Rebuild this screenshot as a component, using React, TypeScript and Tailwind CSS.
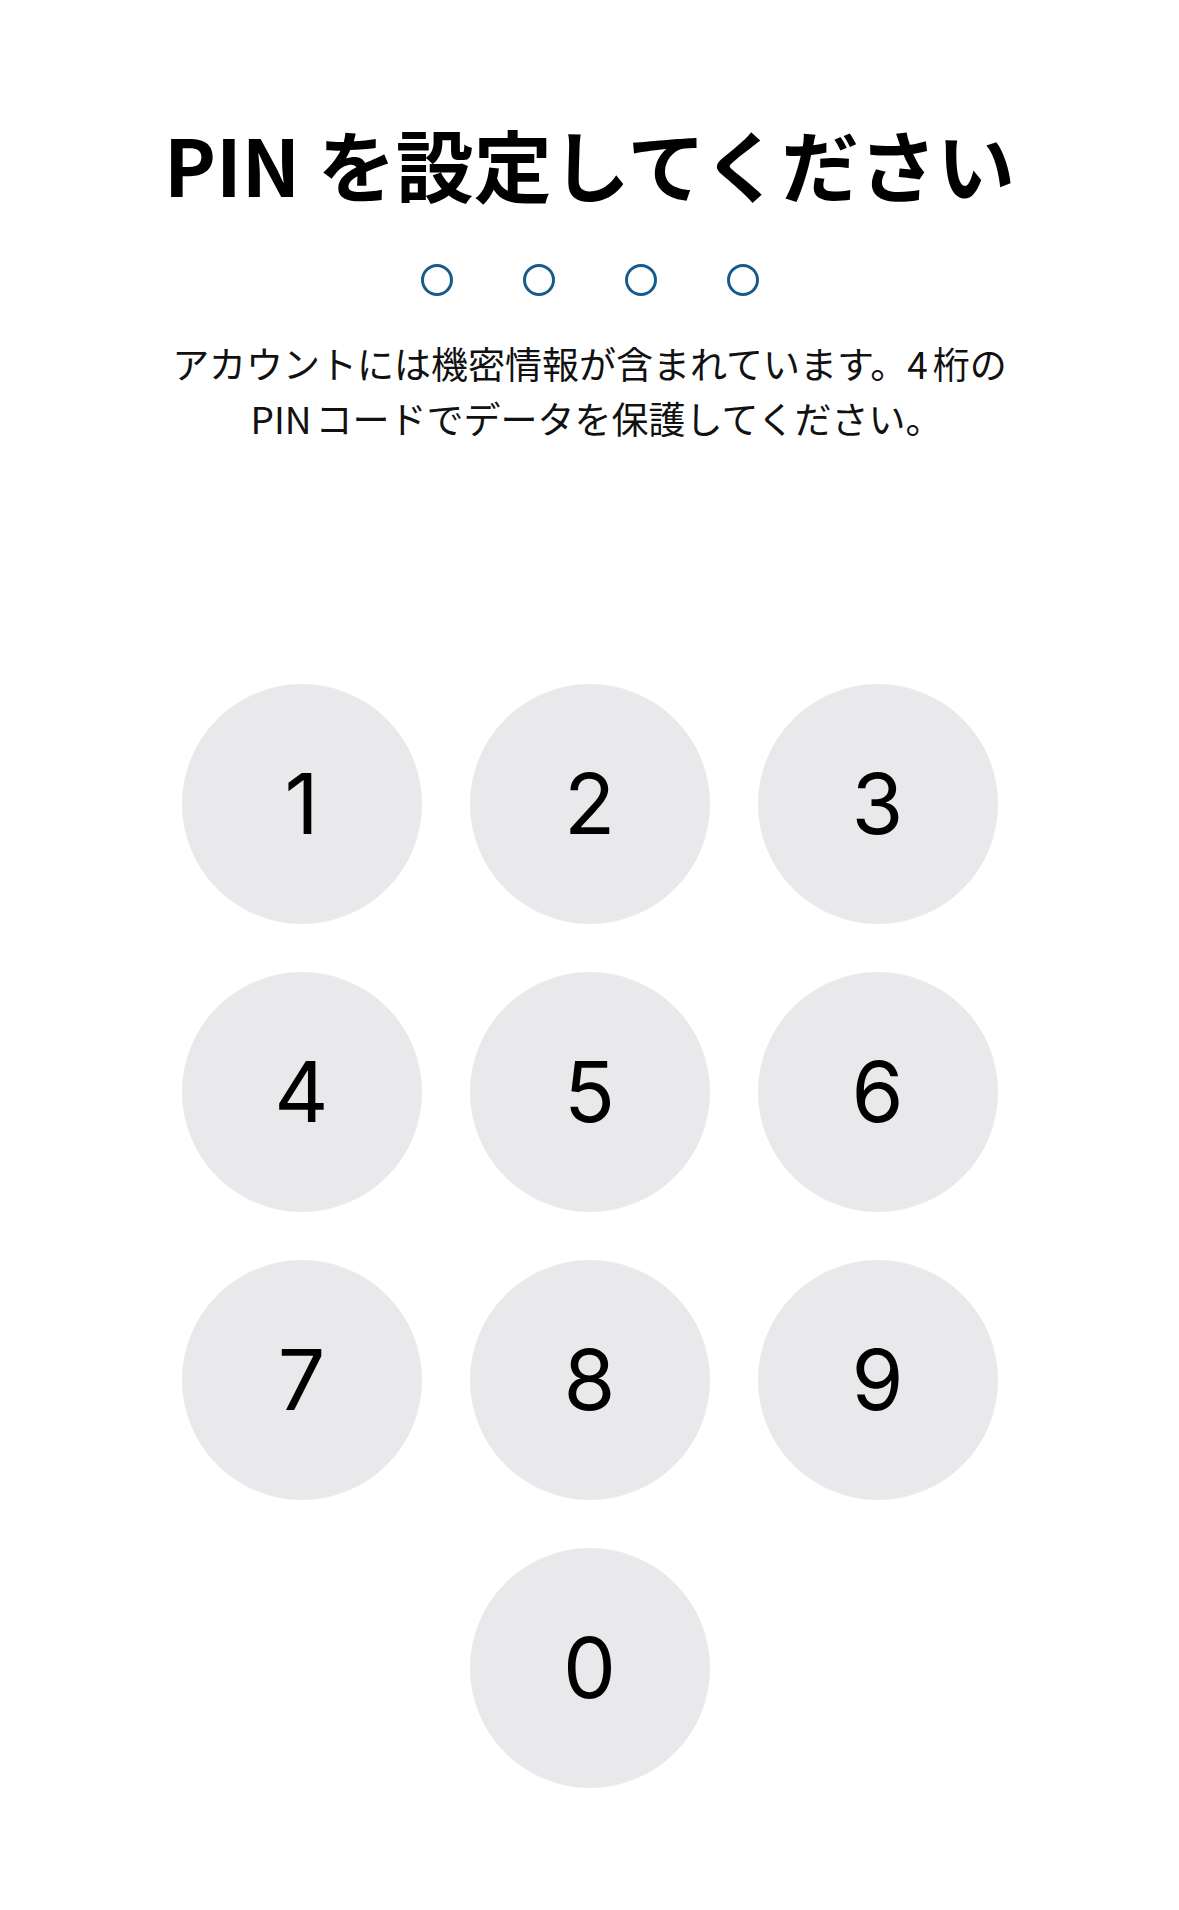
import React from "react";

const jp = { fontFamily: '"Noto Sans CJK JP", "Noto Sans", sans-serif' };

export default function App() {
  const keys = ["1", "2", "3", "4", "5", "6", "7", "8", "9"];
  return (
    <div className="w-[1179px] h-[1910px] bg-white flex flex-col items-center text-black" style={jp}>
      <h1 className="mt-[124px] text-[78px] leading-[78px] font-bold text-black">
        PIN を設定してください
      </h1>
      <div className="mt-[62px] flex gap-[70px]">
        {[0, 1, 2, 3].map((i) => (
          <div key={i} className="w-[32px] h-[32px] rounded-full border-[3px] border-[#165b8c]" />
        ))}
      </div>
      <p className="mt-[40px] text-[37px] leading-[55px] text-center text-[#111]">
        アカウントには機密情報が含まれています。4<span className="ml-[5px]">桁の</span>
        <br />
        <span className="ml-[14px]">PIN</span>
        <span className="ml-[4px]">コードでデータを保護してください。</span>
      </p>
      <div
        className="mt-[238px] grid grid-cols-[240px_240px_240px] gap-[48px]"
        style={{ fontFamily: 'Inter, "Noto Sans", sans-serif' }}
      >
        {keys.map((k) => (
          <button
            key={k}
            className="w-[240px] h-[240px] rounded-full bg-[#e9e9eb] flex items-center justify-center text-[84px] font-normal text-black"
          >
            {k}
          </button>
        ))}
        <div />
        <button className="w-[240px] h-[240px] rounded-full bg-[#e9e9eb] flex items-center justify-center text-[84px] font-normal text-black">
          0
        </button>
        <div />
      </div>
    </div>
  );
}
